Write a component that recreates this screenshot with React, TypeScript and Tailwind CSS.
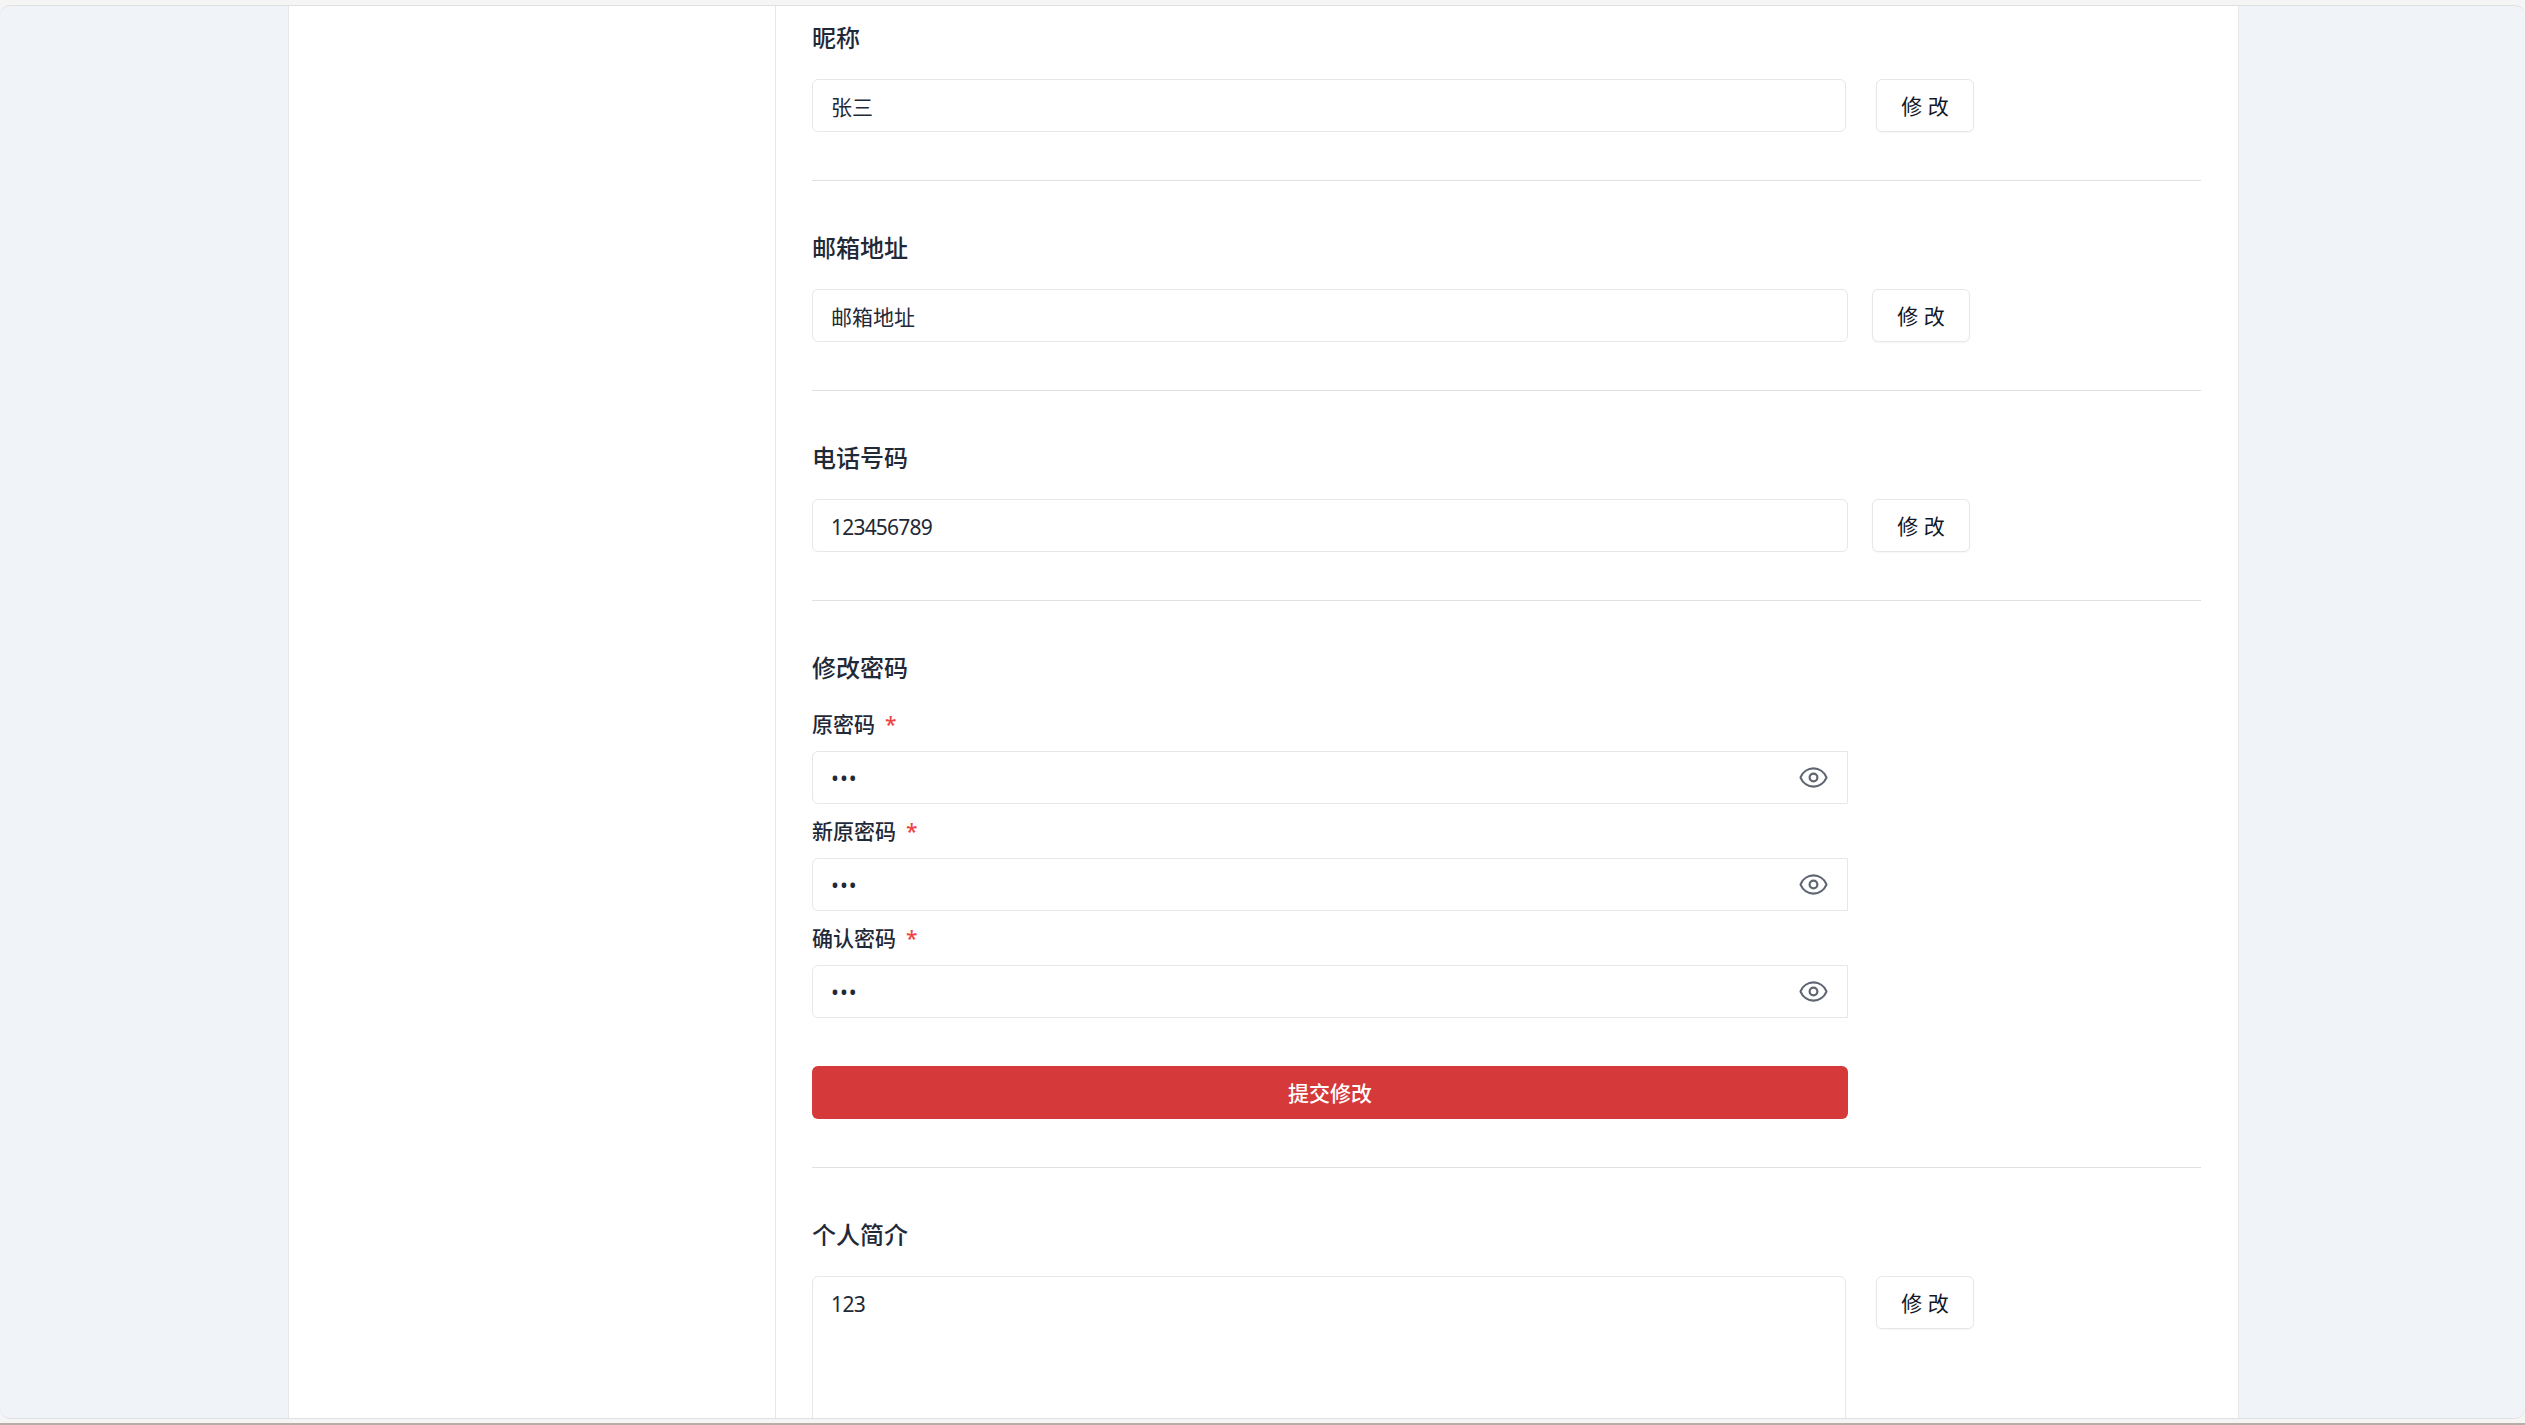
import { Eye } from "lucide-react";

const font = "font-['Noto_Sans','Noto_Sans_CJK_SC',sans-serif]";

function Heading({ children }: { children: string }) {
  return <h3 className="h-[36px] text-[24px] leading-[36px] font-medium text-[#1f2937]">{children}</h3>;
}

function Divider() {
  return <div className="mt-[48px] mb-[49px] h-px bg-[#dedfe2]" />;
}

function EditButton({ className }: { className: string }) {
  return (
    <button
      type="button"
      className={`h-[53px] w-[98px] shrink-0 rounded-md border border-[#e5e7eb] bg-white pt-[2px] text-[21px] font-normal text-[#111827] shadow-[0_1px_2px_rgba(0,0,0,0.04)] ${className}`}
    >
      修 改
    </button>
  );
}

function FieldRow({
  value,
  inputWidth,
  gap,
  numeric,
}: {
  value: string;
  inputWidth: string;
  gap: string;
  numeric?: boolean;
}) {
  return (
    <div className="mt-[23px] flex">
      <input
        readOnly
        defaultValue={value}
        className={`h-[53px] rounded-md border border-[#e5e7eb] bg-white px-[18px] text-[21px] text-[#1f2937] outline-none ${inputWidth} ${numeric ? "pt-[2px] tracking-[-0.8px]" : ""}`}
      />
      <EditButton className={gap} />
    </div>
  );
}

function PasswordField({ label }: { label: string }) {
  return (
    <div>
      <div className="flex h-[54px] items-start pt-[12px] text-[21px] leading-[31px] font-medium text-[#1f2937]">
        <span>{label}</span>
        <span className="ml-[10px] text-[#ef4444]">*</span>
      </div>
      <div className="flex h-[53px] w-[1036px] items-center rounded-l-md border border-[#e5e7eb] bg-white pr-[18px] pl-[18px]">
        <input
          readOnly
          type="password"
          defaultValue="123"
          className="min-w-0 flex-1 pt-[3px] text-[21px] tracking-[1px] text-[#1f2937] outline-none"
        />
        <Eye size={31} strokeWidth={1.7} className="text-[#5f6672]" />
      </div>
    </div>
  );
}

export default function App() {
  return (
    <div className={`flex h-[1425px] w-full flex-col overflow-hidden bg-[#f5f5f5] ${font}`}>
      <div className="h-[5px] shrink-0" />
      <div className="flex min-h-0 flex-1 overflow-hidden rounded-[10px] border-y border-[#e0e0e0] bg-[#f0f4f8]">
        <div className="w-[288px] shrink-0" />
        <main className="flex w-[1951px] shrink-0 overflow-hidden border-x border-[#e5e7eb] bg-white">
          <div className="w-[487px] shrink-0 border-r border-[#e5e7eb]" />
          <div className="min-w-0 flex-1 pt-[14px] pr-[37px] pl-[36px]">
            <section>
              <Heading>昵称</Heading>
              <FieldRow value="张三" inputWidth="w-[1034px]" gap="ml-[30px]" />
            </section>
            <Divider />
            <section>
              <Heading>邮箱地址</Heading>
              <FieldRow value="邮箱地址" inputWidth="w-[1036px]" gap="ml-[24px]" />
            </section>
            <Divider />
            <section>
              <Heading>电话号码</Heading>
              <FieldRow value="123456789" inputWidth="w-[1036px]" gap="ml-[24px]" numeric />
            </section>
            <Divider />
            <section>
              <Heading>修改密码</Heading>
              <div className="mt-[11px]">
                <PasswordField label="原密码" />
                <PasswordField label="新原密码" />
                <PasswordField label="确认密码" />
              </div>
              <button
                type="button"
                className="mt-[48px] h-[53px] w-[1036px] rounded-md bg-[#d63939] pt-[2px] text-[21px] font-medium text-white"
              >
                提交修改
              </button>
            </section>
            <Divider />
            <section>
              <Heading>个人简介</Heading>
              <div className="mt-[23px] flex items-start">
                <textarea
                  readOnly
                  defaultValue="123"
                  className="h-[240px] w-[1034px] resize-none rounded-md border border-[#e5e7eb] bg-white px-[18px] pt-[11px] pb-[10px] text-[21px] leading-[32px] tracking-[-0.6px] text-[#1f2937] outline-none"
                />
                <EditButton className="ml-[30px]" />
              </div>
            </section>
          </div>
        </main>
        <div className="flex-1" />
      </div>
      <div className="h-[4px] shrink-0" />
      <div className="h-[2px] shrink-0 bg-[#b9aea6]" />
    </div>
  );
}
